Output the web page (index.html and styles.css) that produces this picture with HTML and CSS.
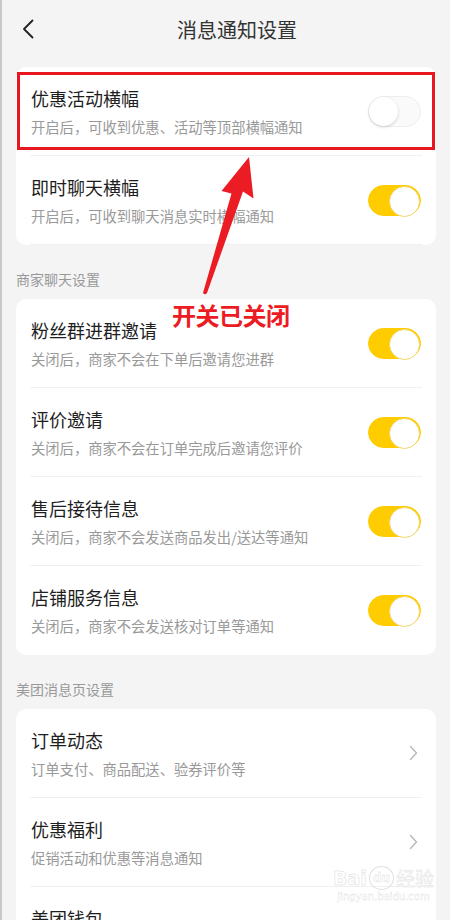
FILE: index.html
```html
<!DOCTYPE html>
<html lang="zh-CN">
<head>
    <meta charset="UTF-8">
    <meta name="viewport" content="width=device-width, initial-scale=1.0">
    <title>消息通知设置</title>
    <link rel="stylesheet" href="styles.css">
</head>
<body>
    <div class="page">
        <header class="top-bar">
            <a class="back" href="#" aria-label="返回">
                <svg width="12" height="20" viewBox="0 0 12 20"><path d="M10.5 1.5 L2 10 L10.5 18.5" fill="none" stroke="#222" stroke-width="1.8" stroke-linecap="round" stroke-linejoin="round"/></svg>
            </a>
            <h1>消息通知设置</h1>
            <span></span>
        </header>

        <section class="card card-first">
            <div class="row">
                <div class="text">
                    <p class="title">优惠活动横幅</p>
                    <p class="desc">开启后，可收到优惠、活动等顶部横幅通知</p>
                </div>
                <span class="switch"></span>
            </div>
            <div class="row">
                <div class="text">
                    <p class="title">即时聊天横幅</p>
                    <p class="desc">开启后，可收到聊天消息实时横幅通知</p>
                </div>
                <span class="switch on"></span>
            </div>
            <!-- annotation box -->
            <div class="mark-box"></div>
        </section>

        <p class="section-label">商家聊天设置</p>
        <section class="card">
            <div class="row">
                <div class="text">
                    <p class="title">粉丝群进群邀请</p>
                    <p class="desc">关闭后，商家不会在下单后邀请您进群</p>
                </div>
                <span class="switch on"></span>
            </div>
            <div class="row">
                <div class="text">
                    <p class="title">评价邀请</p>
                    <p class="desc">关闭后，商家不会在订单完成后邀请您评价</p>
                </div>
                <span class="switch on"></span>
            </div>
            <div class="row">
                <div class="text">
                    <p class="title">售后接待信息</p>
                    <p class="desc">关闭后，商家不会发送商品发出/送达等通知</p>
                </div>
                <span class="switch on"></span>
            </div>
            <div class="row">
                <div class="text">
                    <p class="title">店铺服务信息</p>
                    <p class="desc">关闭后，商家不会发送核对订单等通知</p>
                </div>
                <span class="switch on"></span>
            </div>
        </section>

        <p class="section-label">美团消息页设置</p>
        <section class="card">
            <div class="row">
                <div class="text">
                    <p class="title">订单动态</p>
                    <p class="desc">订单支付、商品配送、验券评价等</p>
                </div>
                <svg class="chevron" width="9" height="16" viewBox="0 0 9 16"><path d="M1.5 1.5 L7.5 8 L1.5 14.5" fill="none" stroke="#b8b8b8" stroke-width="1.4" stroke-linecap="round" stroke-linejoin="round"/></svg>
            </div>
            <div class="row">
                <div class="text">
                    <p class="title">优惠福利</p>
                    <p class="desc">促销活动和优惠等消息通知</p>
                </div>
                <svg class="chevron" width="9" height="16" viewBox="0 0 9 16"><path d="M1.5 1.5 L7.5 8 L1.5 14.5" fill="none" stroke="#b8b8b8" stroke-width="1.4" stroke-linecap="round" stroke-linejoin="round"/></svg>
            </div>
            <div class="row">
                <div class="text">
                    <p class="title">美团钱包</p>
                    <p class="desc">余额变动、账单提醒等</p>
                </div>
                <svg class="chevron" width="9" height="16" viewBox="0 0 9 16"><path d="M1.5 1.5 L7.5 8 L1.5 14.5" fill="none" stroke="#b8b8b8" stroke-width="1.4" stroke-linecap="round" stroke-linejoin="round"/></svg>
            </div>
        </section>

        <!-- red arrow + note drawn over the screenshot -->
        <svg class="arrow" width="60" height="150" viewBox="200 150 60 150">
            <path d="M249 157 L253.5 198.5 L243 191.5 L207 293 Q205 295.5 203 293 L231.5 193.5 L221.5 191 Z" fill="#ec1c24"/>
        </svg>
        <p class="note">开关已关闭</p>

        <div class="watermark">
            <div class="wm-logo">Bai<span class="paw">du</span><span class="wm-cn">经验</span></div>
            <div class="wm-url">jingyan.baidu.com</div>
        </div>
    </div>
</body>
</html>
```

FILE: styles.css
```css
:root {
    --bg: #f4f4f4;
    --card: #ffffff;
    --text-main: #222;
    --text-sub: #999;
    --line: #f0f0f0;
    --yellow: #ffcc00;
    --red: #ec1c24;
}

* {
    box-sizing: border-box;
    margin: 0;
    padding: 0;
}

body {
    font-family: "Noto Sans CJK SC", "Noto Sans", sans-serif;
    background: var(--bg);
    color: var(--text-main);
    overflow: hidden;
}

.page {
    position: relative;
    width: 450px;
    height: 920px;
    overflow: hidden;
    border-left: 2px solid #c9c9c9;
    padding: 0 14px;
}

/* header */
.top-bar {
    height: 58px;
    display: grid;
    grid-template-columns: 40px 1fr 40px;
    align-items: center;
    margin: 0 -14px;
    padding: 0 14px 0 20px;
}

.back {
    display: flex;
    align-items: center;
}

.top-bar h1 {
    text-align: center;
    font-size: 20px;
    font-weight: 400;
    color: #333;
    margin-left: 16px;
}

/* cards */
.card {
    position: relative;
    background: var(--card);
    border-radius: 10px;
    padding: 0 14px;
}

.card-first {
    margin-top: 9px;
}

.row {
    height: 89px;
    display: flex;
    align-items: center;
    justify-content: space-between;
    border-bottom: 1px solid var(--line);
}

.card .row:last-of-type {
    border-bottom: none;
}

.text {
    padding-left: 1px;
}

.title {
    font-size: 18px;
    line-height: 24px;
    font-weight: 400;
    color: #1e1e1e;
}

.desc {
    font-size: 14.3px;
    line-height: 20px;
    margin-top: 7px;
    color: var(--text-sub);
}

.section-label {
    font-size: 14px;
    line-height: 20px;
    color: var(--text-sub);
    padding: 24px 0 10px;
}

/* switches */
.switch {
    position: relative;
    width: 53px;
    height: 31px;
    border-radius: 16px;
    background: #fafafa;
    border: 1px solid #eeeeee;
    flex-shrink: 0;
    margin-right: 1px;
}

.switch::after {
    content: '';
    position: absolute;
    top: 0;
    left: 0;
    width: 29px;
    height: 29px;
    border-radius: 50%;
    background: #fff;
    box-shadow: 0 1px 3px rgba(0, 0, 0, 0.18);
}

.switch.on {
    background: var(--yellow);
    border-color: var(--yellow);
}

.switch.on::after {
    left: auto;
    right: 0;
    border: 1px solid #f3d66a;
    box-shadow: none;
}

.chevron {
    margin-right: 4px;
}

/* annotation overlay */
.mark-box {
    position: absolute;
    top: 5px;
    left: 1px;
    right: 1px;
    height: 78px;
    border: 3px solid #e8161f;
}

.arrow {
    position: absolute;
    left: 198px;
    top: 150px;
}

.note {
    position: absolute;
    left: 170px;
    top: 300px;
    font-size: 24px;
    line-height: 30px;
    font-weight: 700;
    color: var(--red);
    letter-spacing: -0.5px;
}

/* watermark */
.watermark {
    position: absolute;
    left: 331px;
    top: 866px;
    color: rgba(255, 255, 255, 0.7);
    -webkit-text-stroke: 0.5px #dadada;
    text-align: center;
}

.wm-logo {
    font-size: 19px;
    line-height: 24px;
    font-weight: 700;
    font-family: "DejaVu Sans", sans-serif;
    display: flex;
    align-items: center;
}

.wm-logo .paw {
    display: inline-block;
    font-size: 12px;
    line-height: 18px;
    padding: 2px 3px;
    margin: 0 2px;
    border: 1.5px solid #e0e0e0;
    border-radius: 50%;
    -webkit-text-stroke: 0.4px #dadada;
}

.wm-cn {
    font-family: "Noto Sans CJK SC", sans-serif;
    font-weight: 400;
    color: #fafafa;
    -webkit-text-stroke: 0.4px #e0e0e0;
}

.wm-url {
    font-size: 10px;
    line-height: 14px;
    font-family: "DejaVu Sans", sans-serif;
    -webkit-text-stroke: 0.3px #dddddd;
}
```
